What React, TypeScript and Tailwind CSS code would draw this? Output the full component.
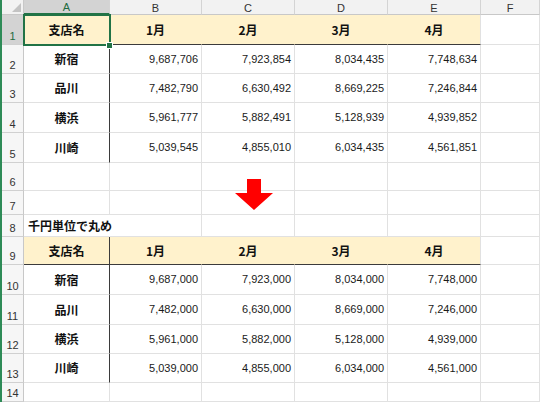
import React from "react";

const FONT = { fontFamily: '"Liberation Sans", "Noto Sans CJK JP", sans-serif' };
const JP = { fontFamily: '"Noto Sans CJK JP", "Liberation Sans", sans-serif' };

const colLetters = ["A", "B", "C", "D", "E", "F"];
const colW = ["w-[86px]", "w-[92px]", "w-[93px]", "w-[93px]", "w-[93px]", "flex-1"];
const rowH = [
  "h-[30px]", "h-[29px]", "h-[29px]", "h-[30px]", "h-[30px]", "h-[28px]", "h-[24px]",
  "h-[22px]", "h-[28px]", "h-[30px]", "h-[30px]", "h-[29px]", "h-[29px]", "h-[19px]",
];

const months = ["1月", "2月", "3月", "4月"];

const table1: [string, string[]][] = [
  ["新宿", ["9,687,706", "7,923,854", "8,034,435", "7,748,634"]],
  ["品川", ["7,482,790", "6,630,492", "8,669,225", "7,246,844"]],
  ["横浜", ["5,961,777", "5,882,491", "5,128,939", "4,939,852"]],
  ["川崎", ["5,039,545", "4,855,010", "6,034,435", "4,561,851"]],
];

const table2: [string, string[]][] = [
  ["新宿", ["9,687,000", "7,923,000", "8,034,000", "7,748,000"]],
  ["品川", ["7,482,000", "6,630,000", "8,669,000", "7,246,000"]],
  ["横浜", ["5,961,000", "5,882,000", "5,128,000", "4,939,000"]],
  ["川崎", ["5,039,000", "4,855,000", "6,034,000", "4,561,000"]],
];

type Row =
  | { kind: "head" }
  | { kind: "data"; name: string; vals: string[] }
  | { kind: "blank" }
  | { kind: "title"; text: string };

const rows: Row[] = [
  { kind: "head" },
  ...table1.map(([name, vals]) => ({ kind: "data" as const, name, vals })),
  { kind: "blank" },
  { kind: "blank" },
  { kind: "title", text: "千円単位で丸め" },
  { kind: "head" },
  ...table2.map(([name, vals]) => ({ kind: "data" as const, name, vals })),
  { kind: "blank" },
];

function RowHeader({ n, h, selected }: { n: number; h: string; selected?: boolean }) {
  return (
    <div
      className={`${h} w-[22px] shrink-0 flex items-end justify-center border-b border-b-[#d0d0d0] border-r border-r-[#c8c8c8] text-[11px] leading-[13px] pb-[1px] ${
        selected ? "bg-[#d3d3d3] text-[#1e6b40]" : "bg-[#f6f6f6] text-[#333]"
      }`}
    >
      {n}
    </div>
  );
}

function Cell({
  w,
  className,
  children,
}: {
  w: string;
  className: string;
  children?: React.ReactNode;
}) {
  return <div className={`${w} shrink-0 h-full flex items-center border-b border-r ${className}`}>{children}</div>;
}

function SheetRow({ row, idx }: { row: Row; idx: number }) {
  const h = rowH[idx];
  const grid = "border-b-[#e1e1e1] border-r-[#e1e1e1]";
  return (
    <div className={`flex ${h}`}>
      <RowHeader n={idx + 1} h={h} selected={idx === 0} />
      {row.kind === "head" &&
        colW.map((w, c) => {
          if (c === 5) return <Cell key={c} w={w} className={grid} />;
          if (c === 0)
            return (
              <Cell key={c} w={w} className="bg-[#fff2cc] border-b-[#3b3b3b] border-r-[#3b3b3b] justify-center">
                <span className="text-[12px] font-bold text-[#111]" style={JP}>
                  支店名
                </span>
              </Cell>
            );
          return (
            <Cell
              key={c}
              w={w}
              className={`bg-[#fff2cc] border-b-[#3b3b3b] justify-center ${
                c === 4 ? "border-r-[#e1e1e1]" : "border-r-[#fff2cc]"
              }`}
            >
              <span className="text-[12px] font-bold text-[#111]" style={JP}>
                {months[c - 1]}
              </span>
            </Cell>
          );
        })}
      {row.kind === "data" &&
        colW.map((w, c) => {
          if (c === 0)
            return (
              <Cell key={c} w={w} className="border-b-[#e1e1e1] border-r-[#3b3b3b] justify-center">
                <span className="text-[12px] font-bold text-[#111]" style={JP}>
                  {row.name}
                </span>
              </Cell>
            );
          if (c === 5) return <Cell key={c} w={w} className={grid} />;
          return (
            <Cell key={c} w={w} className={`${grid} justify-end pr-[3px]`}>
              <span className="text-[11px] text-[#1a1a1a]" style={FONT}>
                {row.vals[c - 1]}
              </span>
            </Cell>
          );
        })}
      {row.kind === "blank" && colW.map((w, c) => <Cell key={c} w={w} className={grid} />)}
      {row.kind === "title" &&
        colW.map((w, c) =>
          c === 0 ? (
            <Cell key={c} w={w} className="border-b-[#e1e1e1] border-r-white pl-[4px] relative z-10">
              <span className="whitespace-nowrap text-[12px] font-bold text-[#111]" style={JP}>
                {row.text}
              </span>
            </Cell>
          ) : (
            <Cell key={c} w={w} className={grid} />
          )
        )}
    </div>
  );
}

export default function App() {
  return (
    <div className="w-[540px] h-[402px] overflow-hidden bg-white flex" style={FONT}>
      <div className="w-[2px] h-full bg-[#2e8b57] shrink-0" />
      <div className="flex-1 flex flex-col relative">
        {/* column headers */}
        <div className="flex h-[15px] bg-[#f2f2f2]">
          <div className="w-[22px] shrink-0 h-full border-b border-b-[#c8c8c8] border-r border-r-[#c8c8c8] relative">
            <svg className="absolute right-[2px] bottom-[2px]" width="9" height="9" viewBox="0 0 9 9">
              <polygon points="9,0 9,9 0,9" fill="#c3c3c3" />
            </svg>
          </div>
          {colLetters.map((l, c) => (
            <div
              key={l}
              className={`${colW[c]} shrink-0 h-full flex items-end justify-center border-r border-r-[#d4d4d4] text-[11px] leading-[12px] ${
                c === 0
                  ? "bg-[#d3d3d3] text-[#1e6b40] border-b-2 border-b-[#217346]"
                  : "border-b border-b-[#c8c8c8] text-[#333]"
              }`}
            >
              {l}
            </div>
          ))}
        </div>

        {rows.map((r, i) => (
          <SheetRow key={i} row={r} idx={i} />
        ))}

        {/* active cell A1 */}
        <div className="absolute left-[21px] top-[14px] w-[88px] h-[32px] border-2 border-[#217346] pointer-events-none" />
        <div className="absolute left-[104px] top-[42px] w-[7px] h-[7px] bg-[#217346] border border-white" />

        {/* red arrow */}
        <svg className="absolute left-[233px] top-[179px]" width="38" height="31" viewBox="0 0 38 31">
          <polygon points="12,0 26,0 26,14 38,14 19,31 0,14 12,14" fill="#ff0000" />
        </svg>
      </div>
    </div>
  );
}
